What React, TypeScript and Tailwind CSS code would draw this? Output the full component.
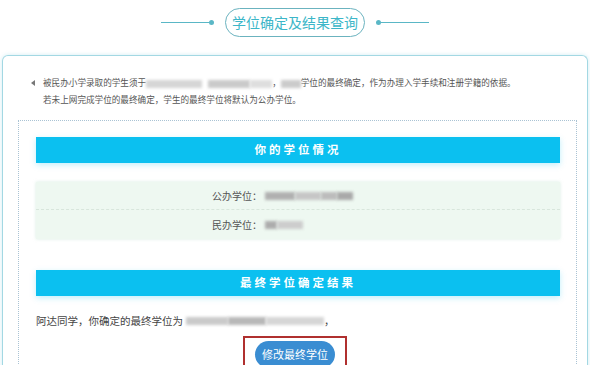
import React from 'react';

const FONT = "font-['Microsoft_YaHei','Noto_Sans_CJK_SC',sans-serif]";

function Blur({ w, tone = 'bg-[#b9b9b9]' }: { w: number; tone?: string }) {
  return <span className={`inline-block h-[8px] align-middle blur-[1.8px] ${tone}`} style={{ width: w }} />;
}

function SectionBar({ children }: { children: React.ReactNode }) {
  return (
    <div className="flex h-[26px] items-center justify-center bg-[#0bc0f0] text-[11.5px] font-bold tracking-[3px] text-white shadow-[0_2px_6px_rgba(0,192,240,0.25)]">
      {children}
    </div>
  );
}

export default function App() {
  return (
    <div className={`h-[365px] w-[590px] overflow-hidden bg-white ${FONT}`}>
      <div className="flex items-center justify-center pt-[8px]">
        <div className="h-[1.5px] w-[48px] bg-[#5ab7c6]" />
        <div className="h-[5px] w-[5px] rounded-full bg-[#5ab7c6]" />
        <div className="mx-[11px] flex h-[29px] items-center rounded-full border-[1.5px] border-[#6bb3bf] px-[6px] text-[14px] text-[#3cb6c8]">
          学位确定及结果查询
        </div>
        <div className="h-[5px] w-[5px] rounded-full bg-[#5ab7c6]" />
        <div className="h-[1.5px] w-[48px] bg-[#5ab7c6]" />
      </div>

      <div className="mt-[18px] ml-[2px] w-[586px] rounded-t-[6px] border border-b-0 border-[#a3d8e3] shadow-[0_0_4px_rgba(120,200,220,0.35)]">
        <div className="flex pt-[18px] pl-[28px] text-[8.6px] leading-[17px] text-[#555]">
          <div className="flex h-[17px] w-[12px] shrink-0 items-center">
            <span className="h-0 w-0 border-y-[3px] border-r-[4px] border-y-transparent border-r-[#777]" />
          </div>
          <div>
            <div className="whitespace-nowrap">
              被民办小学录取的学生须于
              <Blur w={56} tone="bg-[#d6d6d6]" />
              <span className="inline-block w-[6px]" />
              <Blur w={42} tone="bg-[#cacaca]" />
              <Blur w={22} tone="bg-[#dedede]" />
              ，
              <Blur w={20} tone="bg-[#cbcbcb]" />
              学位的最终确定，作为办理入学手续和注册学籍的依据。
            </div>
            <div>若未上网完成学位的最终确定，学生的最终学位将默认为公办学位。</div>
          </div>
        </div>

        <div className="mt-[12px] mr-[10px] ml-[15px] h-[260px] border border-b-0 border-dotted border-[#aac3d4] px-[17px] pt-[16px] pr-[16px]">
          <SectionBar>你的学位情况</SectionBar>

          <div className="mt-[19px] bg-[#eef8f1] text-[10px] text-[#555] shadow-[0_0_3px_rgba(180,220,200,0.5)]">
            <div className="flex h-[28px] items-center border-b border-dashed border-[#d8e6dc]">
              <span className="w-[226px] text-right">公办学位：</span>
              <span className="ml-[3px] flex items-center">
                <Blur w={30} tone="bg-[#b0b0b0]" />
                <Blur w={26} tone="bg-[#c6c6c6]" />
                <Blur w={16} tone="bg-[#bcbcbc]" />
                <Blur w={16} tone="bg-[#a9a9a9]" />
              </span>
            </div>
            <div className="flex h-[29px] items-center">
              <span className="w-[226px] text-right">民办学位：</span>
              <span className="ml-[3px] flex items-center">
                <Blur w={12} tone="bg-[#acacac]" />
                <Blur w={26} tone="bg-[#cdcdcd]" />
              </span>
            </div>
          </div>

          <div className="mt-[31px]">
            <SectionBar>最终学位确定结果</SectionBar>
          </div>

          <div className="mt-[17px] flex items-center text-[10.5px] leading-[16px] text-[#444]">
            阿达同学，你确定的最终学位为
            <span className="ml-[3px] flex items-center">
              <Blur w={42} tone="bg-[#cacaca]" />
              <Blur w={38} tone="bg-[#b8b8b8]" />
              <Blur w={58} tone="bg-[#d6d6d6]" />
            </span>
            ，
          </div>

          <div className="mt-[7px] flex justify-center pr-[6px]">
            <div className="border-2 border-b-0 border-[#b0302f] px-[10px] pt-[3px] pb-[4px]">
              <div className="flex h-[27px] w-[80px] items-center justify-center rounded-full bg-[#3a8dd2] text-[11px] text-white">
                修改最终学位
              </div>
            </div>
          </div>
        </div>
      </div>
    </div>
  );
}
